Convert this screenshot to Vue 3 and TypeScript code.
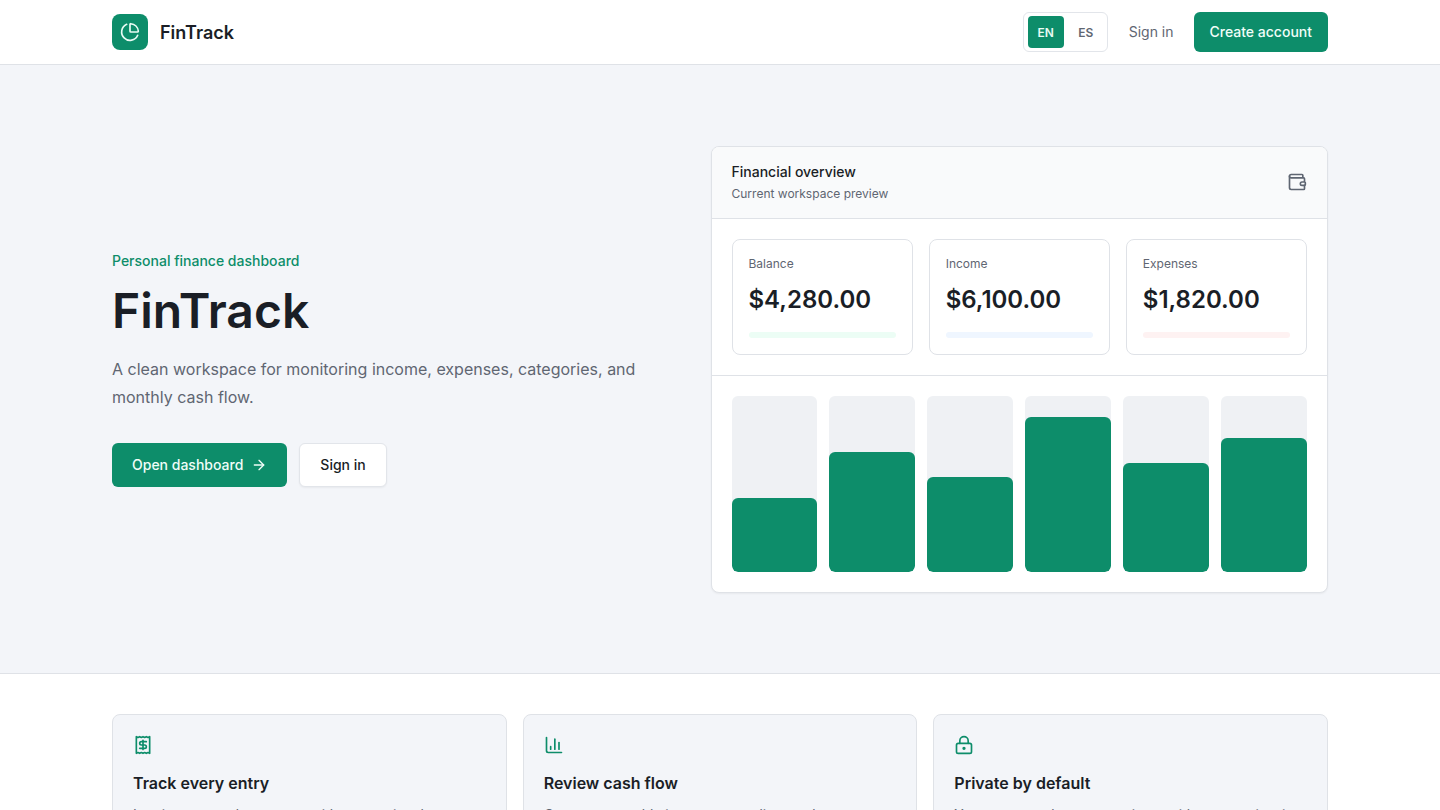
<script setup lang="ts">
const stats = [
  { label: 'Balance', value: '$4,280.00', tone: 'green' },
  { label: 'Income', value: '$6,100.00', tone: 'blue' },
  { label: 'Expenses', value: '$1,820.00', tone: 'red' },
]

const bars = [42, 68, 54, 88, 62, 76]

const features = [
  {
    title: 'Track every entry',
    text: 'Log income and expenses with categories that stay organized.',
    icon: 'receipt',
  },
  {
    title: 'Review cash flow',
    text: 'Compare monthly income, spending, and category totals.',
    icon: 'chart',
  },
  {
    title: 'Private by default',
    text: 'Your account data stays private with secure sign-in sessions.',
    icon: 'lock',
  },
]
</script>

<template>
  <div class="page">
    <header class="topbar">
      <div class="wrap topbar-inner">
        <a class="brand">
          <span class="brand-mark">
            <svg width="20" height="20" viewBox="0 0 24 24" fill="none" stroke="currentColor" stroke-width="2" stroke-linecap="round" stroke-linejoin="round">
              <path d="M21 12c.552 0 1.005-.449.95-.998a10 10 0 0 0-8.953-8.951c-.55-.055-.998.398-.998.95v8a1 1 0 0 0 1 1z" />
              <path d="M21.21 15.89A10 10 0 1 1 8 2.83" />
            </svg>
          </span>
          <span class="brand-name">FinTrack</span>
        </a>
        <nav class="topbar-actions">
          <div class="lang">
            <button class="lang-btn active">EN</button>
            <button class="lang-btn">ES</button>
          </div>
          <a class="nav-link">Sign in</a>
          <a class="btn-create">Create account</a>
        </nav>
      </div>
    </header>

    <section class="hero">
      <div class="wrap hero-grid">
        <div class="hero-copy">
          <p class="eyebrow">Personal finance dashboard</p>
          <h1>FinTrack</h1>
          <p class="lead">A clean workspace for monitoring income, expenses, categories, and monthly cash flow.</p>
          <div class="hero-actions">
            <a class="btn btn-primary">
              Open dashboard
              <svg width="16" height="16" viewBox="0 0 24 24" fill="none" stroke="currentColor" stroke-width="2" stroke-linecap="round" stroke-linejoin="round">
                <path d="M5 12h14" />
                <path d="m12 5 7 7-7 7" />
              </svg>
            </a>
            <a class="btn btn-secondary">Sign in</a>
          </div>
        </div>

        <div class="preview">
          <div class="preview-head">
            <div>
              <p class="preview-title">Financial overview</p>
              <p class="preview-sub">Current workspace preview</p>
            </div>
            <svg class="wallet" width="20" height="20" viewBox="0 0 24 24" fill="none" stroke="currentColor" stroke-width="2" stroke-linecap="round" stroke-linejoin="round">
              <path d="M19 7V4a1 1 0 0 0-1-1H5a2 2 0 0 0 0 4h15a1 1 0 0 1 1 1v4h-3a2 2 0 0 0 0 4h3a1 1 0 0 0 1-1v-2a1 1 0 0 0-1-1" />
              <path d="M3 5v14a2 2 0 0 0 2 2h15a1 1 0 0 0 1-1v-4" />
            </svg>
          </div>
          <div class="stats">
            <div v-for="s in stats" :key="s.label" class="stat">
              <p class="stat-label">{{ s.label }}</p>
              <p class="stat-value">{{ s.value }}</p>
              <div class="stat-line" :class="s.tone"></div>
            </div>
          </div>
          <div class="chart">
            <div v-for="(b, i) in bars" :key="i" class="bar">
              <div class="bar-fill" :style="{ height: b + '%' }"></div>
            </div>
          </div>
        </div>
      </div>
    </section>

    <section class="features">
      <div class="wrap feature-grid">
        <article v-for="f in features" :key="f.title" class="feature">
          <svg class="feature-icon" width="20" height="20" viewBox="0 0 24 24" fill="none" stroke="currentColor" stroke-width="2" stroke-linecap="round" stroke-linejoin="round">
            <template v-if="f.icon === 'receipt'">
              <path d="M4 2v20l2-1 2 1 2-1 2 1 2-1 2 1 2-1 2 1V2l-2 1-2-1-2 1-2-1-2 1-2-1-2 1Z" />
              <path d="M16 8h-6a2 2 0 1 0 0 4h4a2 2 0 1 1 0 4H8" />
              <path d="M12 17.5v-11" />
            </template>
            <template v-else-if="f.icon === 'chart'">
              <path d="M3 3v16a2 2 0 0 0 2 2h16" />
              <path d="M18 17V9" />
              <path d="M13 17V5" />
              <path d="M8 17v-3" />
            </template>
            <template v-else>
              <circle cx="12" cy="16" r="1" />
              <rect x="3" y="10" width="18" height="12" rx="2" />
              <path d="M7 10V7a5 5 0 0 1 10 0v3" />
            </template>
          </svg>
          <h2>{{ f.title }}</h2>
          <p>{{ f.text }}</p>
        </article>
      </div>
    </section>
  </div>
</template>

<style>
body {
  background: #f3f5f9;
}
</style>

<style scoped>
.page {
  font-family: Inter, "Liberation Sans", sans-serif;
  color: #1a1e26;
}

p,
h1,
h2 {
  margin: 0;
}

.wrap {
  width: 1216px;
  margin: 0 auto;
}

.topbar {
  background: #fff;
  border-bottom: 1px solid #dfe2e7;
}

.topbar-inner {
  height: 64px;
  display: flex;
  align-items: center;
  justify-content: space-between;
}

.brand {
  display: flex;
  align-items: center;
  gap: 12px;
}

.brand-mark {
  width: 36px;
  height: 36px;
  border-radius: 8px;
  background: #0d8d6a;
  color: #e9fbf4;
  display: flex;
  align-items: center;
  justify-content: center;
}

.brand-name {
  font-size: 18px;
  font-weight: 600;
}

.topbar-actions {
  display: flex;
  align-items: center;
  gap: 12px;
}

.lang {
  display: flex;
  gap: 4px;
  padding: 3px 3px 3px 4px;
  border: 1px solid #e2e5ea;
  border-radius: 6px;
  background: #fff;
}

.lang-btn {
  width: 36px;
  height: 32px;
  padding: 0;
  border: 0;
  border-radius: 4px;
  background: transparent;
  color: #5f6672;
  font: 600 12px Inter, "Liberation Sans", sans-serif;
}

.lang-btn.active {
  background: #0d8d6a;
  color: #e9fbf4;
}

.nav-link {
  padding: 0 8px 1px 9px;
  font-size: 14px;
  color: #5f6672;
}

.btn-create {
  height: 40px;
  box-sizing: border-box;
  padding: 0 16px 1px;
  display: flex;
  align-items: center;
  border-radius: 6px;
  background: #0d8d6a;
  color: #f0fdf8;
  font-size: 14px;
  font-weight: 500;
}

.hero {
  background: #f3f5f9;
  border-bottom: 1px solid #dfe2e7;
  padding: 81px 0 80px;
}

.hero-grid {
  display: grid;
  grid-template-columns: minmax(0, 1fr) 617.5px;
  gap: 48px;
  align-items: center;
}

.hero-copy {
  padding-bottom: 2px;
}

.eyebrow {
  font-size: 14px;
  font-weight: 500;
  line-height: 20px;
  color: #0d8d6a;
}

h1 {
  margin-top: 12px;
  font-size: 48px;
  line-height: 56px;
  font-weight: 600;
}

.lead {
  margin-top: 16px;
  max-width: 560px;
  font-size: 16px;
  line-height: 28px;
  color: #5f6672;
}

.hero-actions {
  margin-top: 32px;
  display: flex;
  gap: 12px;
}

.btn {
  height: 44px;
  box-sizing: border-box;
  display: flex;
  align-items: center;
  gap: 8px;
  border-radius: 6px;
  font-size: 14px;
  font-weight: 500;
}

.btn-primary {
  padding: 0 20px;
  background: #0d8d6a;
  color: #f0fdf8;
}

.btn-secondary {
  padding: 0 20px;
  background: #fff;
  border: 1px solid #e2e5ea;
  box-shadow: 0 1px 2px rgba(0, 0, 0, 0.05);
}

.preview {
  background: #fff;
  border: 1px solid #dfe2e7;
  border-radius: 8px;
  box-shadow: 0 1px 2px rgba(0, 0, 0, 0.05);
  overflow: hidden;
}

.preview-head {
  height: 72px;
  box-sizing: border-box;
  padding: 0 20px 2px;
  display: flex;
  align-items: center;
  justify-content: space-between;
  background: #f9fafb;
  border-bottom: 1px solid #dfe2e7;
}

.preview-title {
  font-size: 14px;
  line-height: 20px;
  font-weight: 500;
}

.preview-sub {
  margin-top: 4px;
  font-size: 12px;
  line-height: 16px;
  color: #5f6672;
}

.wallet {
  color: #5f6672;
}

.stats {
  display: grid;
  grid-template-columns: repeat(3, 1fr);
  gap: 16px;
  padding: 20px;
  border-bottom: 1px solid #dfe2e7;
}

.stat {
  height: 116px;
  box-sizing: border-box;
  padding: 16px;
  border: 1px solid #dfe2e7;
  border-radius: 8px;
}

.stat-label {
  font-size: 12px;
  line-height: 16px;
  color: #5f6672;
}

.stat-value {
  margin-top: 12px;
  font-size: 24px;
  line-height: 32px;
  font-weight: 600;
}

.stat-line {
  margin-top: 16px;
  height: 6px;
  border-radius: 3px;
}

.stat-line.green {
  background: #ecfdf5;
}

.stat-line.blue {
  background: #eff6ff;
}

.stat-line.red {
  background: #fef2f2;
}

.chart {
  height: 176px;
  padding: 20px;
  display: grid;
  grid-template-columns: repeat(6, 1fr);
  gap: 12px;
}

.bar {
  display: flex;
  align-items: flex-end;
  background: #eff1f4;
  border-radius: 6px;
  overflow: hidden;
}

.bar-fill {
  width: 100%;
  background: #0d8d6a;
  border-radius: 6px;
}

.features {
  background: #fff;
  padding: 40px 0;
}

.feature-grid {
  display: grid;
  grid-template-columns: repeat(3, 1fr);
  gap: 16px;
}

.feature {
  padding: 20px;
  background: #f3f5f9;
  border: 1px solid #dfe2e7;
  border-radius: 8px;
}

.feature-icon {
  display: block;
  color: #0d8d6a;
}

.feature h2 {
  margin-top: 16px;
  font-size: 16px;
  line-height: 24px;
  font-weight: 600;
}

.feature p {
  margin-top: 8px;
  font-size: 14px;
  line-height: 23px;
  color: #5f6672;
}
</style>
